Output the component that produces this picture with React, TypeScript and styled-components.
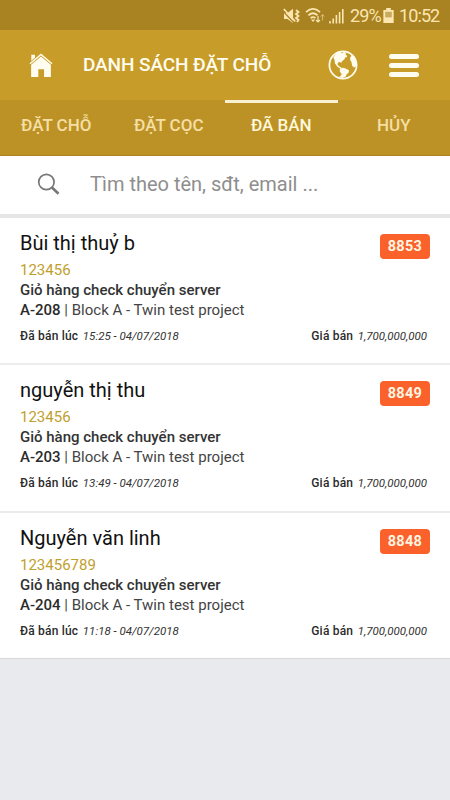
import React from "react";
import styled, { createGlobalStyle, css } from "styled-components";

const Global = createGlobalStyle`
  * { box-sizing: border-box; }
  body { margin: 0; background: #e9eaee; font-family: Roboto, "Noto Sans", sans-serif; }
`;
const Screen = styled.div`
  width: 450px; height: 800px; overflow: hidden; display: flex; flex-direction: column; background: #e9eaee;
  font-family: Roboto, "Noto Sans", sans-serif;
`;
const StatusBar = styled.div`
  height: 30px; flex: none; background: #a98222; color: #fbe6b0; display: flex; align-items: center;
  justify-content: flex-end; padding: 1px 10px 0 0; font-size: 18px;
  svg { display: block; flex: none; }
`;
const StatusIcons = styled.div`
  display: flex; align-items: center; gap: 4px; margin-right: 6px;
`;
const StatusText = styled.span<{ $w: number }>`
  width: ${(p) => p.$w}px; letter-spacing: -0.9px; white-space: nowrap;
`;
const Clock = styled(StatusText)`
  margin-left: 5px;
`;
const Header = styled.header`
  height: 70px; flex: none; background: #c89c28; color: #fffdf0; display: flex; align-items: center; padding: 0 31px 0 29px;
  svg { display: block; flex: none; }
`;
const Title = styled.h1`
  margin: 0 0 0 30px; flex: 1; font-size: 19px; font-weight: 500; letter-spacing: -0.1px; line-height: 24px; white-space: nowrap;
`;
const Menu = styled.div`
  margin: 0 0 0 31px; width: 30px; height: 23px; display: flex; flex-direction: column; justify-content: space-between;
`;
const MenuBar = styled.span`
  height: 5px; border-radius: 2.5px; background: #fffdf0;
`;
const Tabs = styled.nav`
  height: 56px; flex: none; background: #bc9226; display: grid; grid-template-columns: repeat(4, 1fr); border-bottom: 1px solid #ab8320;
`;
const Tab = styled.div<{ $active?: boolean }>`
  display: flex; align-items: center; justify-content: center; padding-bottom: 8px; border-top: 3px solid transparent;
  font-size: 17px; font-weight: 500; color: #f5dfa4;
  ${(p) => p.$active && css`color: #fff8d9; border-top-color: #f9efd3;`}
`;
const Search = styled.div`
  height: 62px; flex: none; background: #fff; display: flex; align-items: center; padding: 0 0 2px 37px; border-bottom: 4px solid #e6e6e6;
  svg { display: block; flex: none; }
`;
const Placeholder = styled.span`
  margin-left: 30px; font-size: 20px; color: #8e8e8e; letter-spacing: 0;
`;
const List = styled.main`
  flex: none;
`;
const Item = styled.article`
  height: 147.4px; background: #fff; border-bottom: 2px solid #ececec; padding: 12px 20px 0; display: flex; flex-direction: column; color: #2b2b2b;
  &:last-child { height: 146.7px; border-bottom: 1px solid #d8d8dc; }
`;
const ItemHead = styled.div`
  display: flex; justify-content: space-between; height: 30px;
`;
const Name = styled.h2`
  margin: 0; font-size: 20px; font-weight: 400; line-height: 27px; color: #111;
`;
const Badge = styled.span`
  width: 50px; height: 25px; margin-top: 4px; border-radius: 4px; background: #fb612b; color: #fff6e2; font-size: 14.5px; font-weight: 700;
  line-height: 25px; text-align: center; letter-spacing: 0.3px;
`;
const Phone = styled.div`
  font-size: 15px; line-height: 20px; color: #bfa02d;
`;
const Project = styled.div`
  font-size: 15px; line-height: 20px; font-weight: 500; color: #333;
`;
const Unit = styled.div`
  font-size: 15px; line-height: 20px; color: #444;
  b { font-weight: 500; color: #2b2b2b; }
`;
const Foot = styled.div`
  display: flex; justify-content: space-between; margin-top: 8px; padding-right: 3px; font-size: 12px; line-height: 16px;
`;
const Detail = styled.span`
  display: flex; gap: 4.5px; align-items: baseline;
  b { font-weight: 500; letter-spacing: 0.2px; }
  i { font-size: 11.5px; color: #333; }
`;

const MuteIcon = () => (
  <svg width="18" height="16" viewBox="0 0 18 16" fill="currentColor">
    <path d="M1 5h3.5L10 .8v14.4L4.500 11H1z" />
    <path d="M0 3l11 12" stroke="#a98222" strokeWidth="1.2" />
    <path d="M.8 1l11.400 12.500" stroke="currentColor" strokeWidth="1.8" />
    <path d="M13 2l2.500 2L13 6l2.500 2L13 10l2.500 2-1.500 2" fill="none" stroke="currentColor" strokeWidth="1.8" />
  </svg>
);
const WifiIcon = () => (
  <svg width="20" height="17" viewBox="0 0 20 16" fill="none" stroke="currentColor" strokeWidth="1.8">
    <path d="M1 4.6Q8-1.8 15 4.6M3.4 7.8Q8 3.6 12.6 7.8M5.6 10.6Q8 8.6 10.4 10.6" />
    <path d="M6 12h4L8 14.5z" fill="currentColor" stroke="none" />
    <path d="M13 8.5v6m-2-2l2 2 2-2" strokeWidth="1.2" />
    <path d="M17.6 13V7m-1.700 2l1.700-1.700L19.300 9" strokeWidth="1" opacity="0.6" />
  </svg>
);
const SignalIcon = () => (
  <svg width="15" height="16" viewBox="0 0 15 16" stroke="currentColor" strokeWidth="1.6">
    <path d="M1 15.5v-2.5M4.2 15.5v-5M7.4 15.5V7M10.6 15.5V4M13.8 15.5V1" />
  </svg>
);
const BatteryIcon = () => (
  <svg width="11" height="15" viewBox="0 0 11 16" fill="currentColor">
    <path d="M3 0h5v2h3v14H0V2h3z" /><path d="M2 4h7v6H2z" fill="#c8aa5b" />
  </svg>
);
const HomeIcon = () => (
  <svg width="24" height="24" viewBox="0 0 25 26" fill="currentColor">
    <path d="M2 2h4v5L2 10.5z" />
    <path d="M1 12L12.5 2 24 12" fill="none" stroke="#c89c28" strokeWidth="4" />
    <path d="M.6 11.6L12.5 1.5l11.9 10.1" fill="none" stroke="currentColor" strokeWidth="1.6" />
    <path d="M1.8 12.6L12.5 3.7l10.7 8.9V26h-7.4v-8.5H9.6V26H1.8z" />
  </svg>
);
const GlobeIcon = () => (
  <svg width="30" height="30" viewBox="0 0 30 30" fill="currentColor">
    <circle cx="15" cy="15" r="13.6" fill="none" stroke="currentColor" strokeWidth="1.7" />
    <path d="M12 1.8L8 3.8 5.3 7.4l1.300 2.600.3 3.200 2.500 3.500 3.700 2.300.5-1.200-2.500-1.500-1.600-1.900.6-1.900 1.800-.4 1.500 1 .3-1.600 2.800-2.300.6-1.700 2-.6-.3-1.500-1.300-1.100L18.200 3 16 1.800l-1.600 1.400z" />
    <path d="M12 18.800l3-1 2.600.8 3.400 1.600-.3 2.400-2.200 1.800-.8 2.200-3.500 1.300-3.200-.8 1.800-1.400.9-1.800-2-2.400z" />
    <path d="M21.500 3.600l2.100 2.200-1.500 1.600.2 2.900 1.200 1.800.6 3.600 1.900 1.700 1.800-1 .6-2.500-.6-4-2-3.500-2-2z" />
  </svg>
);
const SearchIcon = () => (
  <svg width="23" height="22" viewBox="0 0 23 22" fill="none" stroke="#777">
    <circle cx="9.4" cy="9" r="7.7" strokeWidth="1.7" />
    <path d="M14.7 14.3l6.8 6.4" strokeWidth="2.6" />
  </svg>
);

const tabs = ["ĐẶT CHỖ", "ĐẶT CỌC", "ĐÃ BÁN", "HỦY"];
const sales = [
  { name: "Bùi thị thuỷ b", phone: "123456", unit: "A-208", time: "15:25 - 04/07/2018", id: "8853" },
  { name: "nguyễn thị thu", phone: "123456", unit: "A-203", time: "13:49 - 04/07/2018", id: "8849" },
  { name: "Nguyễn văn linh", phone: "123456789", unit: "A-204", time: "11:18 - 04/07/2018", id: "8848" },
];

export default function App() {
  return (
    <Screen>
      <Global />
      <StatusBar>
        <StatusIcons><MuteIcon /><WifiIcon /><SignalIcon /></StatusIcons>
        <StatusText $w={33}>29%</StatusText>
        <BatteryIcon />
        <Clock $w={41}>10:52</Clock>
      </StatusBar>
      <Header>
        <HomeIcon />
        <Title>DANH SÁCH ĐẶT CHỖ</Title>
        <GlobeIcon />
        <Menu><MenuBar /><MenuBar /><MenuBar /></Menu>
      </Header>
      <Tabs>{tabs.map((t, i) => <Tab key={t} $active={i === 2}>{t}</Tab>)}</Tabs>
      <Search>
        <SearchIcon />
        <Placeholder>Tìm theo tên, sđt, email ...</Placeholder>
      </Search>
      <List>
        {sales.map((s) => (
          <Item key={s.id}>
            <ItemHead><Name>{s.name}</Name><Badge>{s.id}</Badge></ItemHead>
            <Phone>{s.phone}</Phone>
            <Project>Giỏ hàng check chuyển server</Project>
            <Unit><b>{s.unit}</b> | Block A - Twin test project</Unit>
            <Foot>
              <Detail><b>Đã bán lúc</b><i>{s.time}</i></Detail>
              <Detail><b>Giá bán</b><i>1,700,000,000</i></Detail>
            </Foot>
          </Item>
        ))}
      </List>
    </Screen>
  );
}
